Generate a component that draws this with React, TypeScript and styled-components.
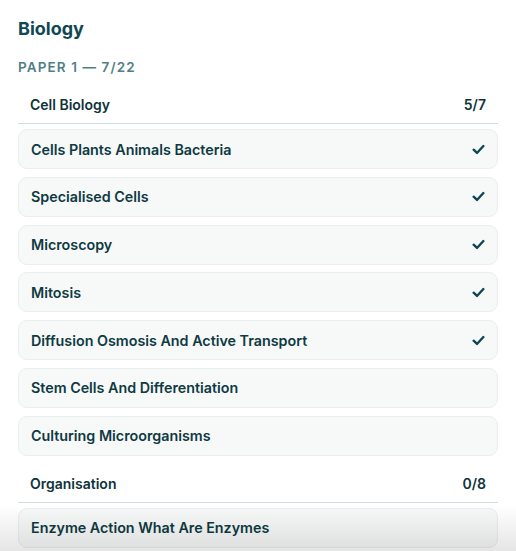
import styled, { createGlobalStyle } from "styled-components";

type Topic = { name: string; done: boolean };
type Section = { title: string; topics: Topic[]; total: number };

const sections: Section[] = [
  {
    title: "Cell Biology",
    total: 7,
    topics: [
      { name: "Cells Plants Animals Bacteria", done: true },
      { name: "Specialised Cells", done: true },
      { name: "Microscopy", done: true },
      { name: "Mitosis", done: true },
      { name: "Diffusion Osmosis And Active Transport", done: true },
      { name: "Stem Cells And Differentiation", done: false },
      { name: "Culturing Microorganisms", done: false },
    ],
  },
  {
    title: "Organisation",
    total: 8,
    topics: [{ name: "Enzyme Action What Are Enzymes", done: false }],
  },
];

export default function App() {
  return (
    <>
      <GlobalStyle />
      <Page>
        <Title>Biology</Title>
        <Paper>Paper 1 — 7/22</Paper>
        {sections.map((section) => (
          <SectionBlock key={section.title}>
            <SectionHeader>
              <span>{section.title}</span>
              <span>
                {section.topics.filter((t) => t.done).length}/{section.total}
              </span>
            </SectionHeader>
            <TopicList>
              {section.topics.map((topic) => (
                <TopicRow key={topic.name}>
                  <span>{topic.name}</span>
                  {topic.done && (
                    <Check viewBox="0 0 12 12">
                      <polyline points="1.5,6.2 4.6,9.2 10.5,2.8" />
                    </Check>
                  )}
                </TopicRow>
              ))}
            </TopicList>
          </SectionBlock>
        ))}
      </Page>
      <BottomFade />
    </>
  );
}

const GlobalStyle = createGlobalStyle`
  body {
    margin: 0;
    background: #ffffff;
    font-family: Inter, "Noto Sans", sans-serif;
    -webkit-font-smoothing: antialiased;
  }
`;

const Page = styled.div`
  display: flex;
  flex-direction: column;
  padding: 17px 18px 40px;
`;

const Title = styled.h1`
  margin: 0;
  font-size: 18px;
  line-height: 24px;
  font-weight: 700;
  color: #0f4753;
`;

const Paper = styled.p`
  margin: 17px 0 0;
  font-size: 13.5px;
  line-height: 18px;
  font-weight: 600;
  letter-spacing: 1.1px;
  text-transform: uppercase;
  color: #4f7f86;
`;

const SectionBlock = styled.div`
  display: flex;
  flex-direction: column;
  margin-top: 10px;
  &:first-of-type {
    margin-top: 11px;
  }
`;

const SectionHeader = styled.div`
  display: flex;
  justify-content: space-between;
  align-items: center;
  padding: 8px 12px;
  border-bottom: 1px solid #cddfe2;
  font-size: 14px;
  line-height: 20px;
  font-weight: 600;
  color: #0e333b;
`;

const TopicList = styled.div`
  display: flex;
  flex-direction: column;
  gap: 7.8px;
  margin-top: 5px;
`;

const TopicRow = styled.div`
  display: flex;
  justify-content: space-between;
  align-items: center;
  height: 40px;
  box-sizing: border-box;
  padding: 0 12px;
  background: #f7f9f9;
  border: 1px solid #e9eeee;
  border-radius: 9px;
  font-size: 14.3px;
  font-weight: 600;
  color: #0f3a42;
`;

const Check = styled.svg`
  width: 13px;
  height: 13px;
  fill: none;
  stroke: #0f4753;
  stroke-width: 2.2;
  stroke-linecap: round;
  stroke-linejoin: round;
`;

const BottomFade = styled.div`
  position: fixed;
  left: 0;
  right: 0;
  bottom: 0;
  height: 46px;
  pointer-events: none;
  background: linear-gradient(
    to bottom,
    rgba(0, 0, 0, 0),
    rgba(0, 0, 0, 0.1)
  );
`;
